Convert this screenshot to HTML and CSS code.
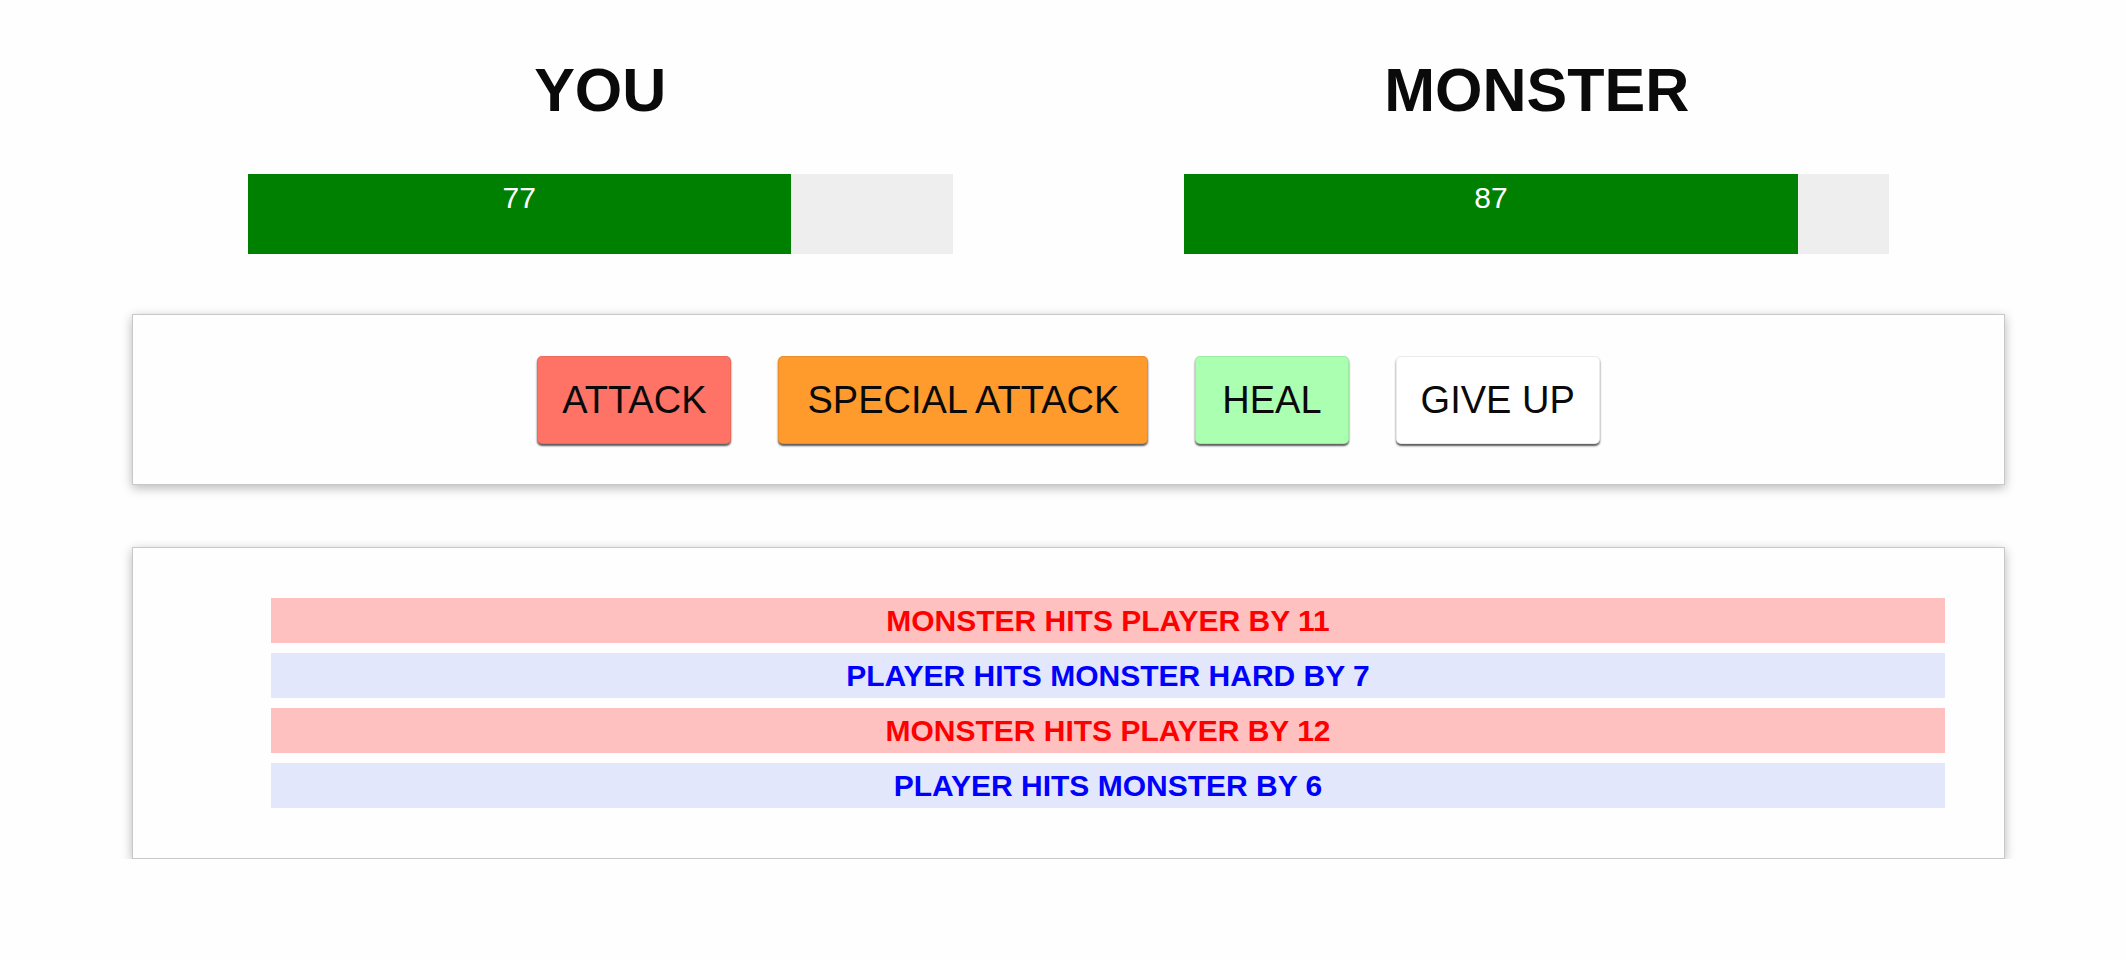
FILE: index.html
```html
<!DOCTYPE html>
<html lang="en">
<head>
<meta charset="utf-8">
<title>Monster Slayer</title>
<link rel="stylesheet" href="styles.css">
</head>
<body>
<div class="app">
  <section class="combatants">
    <div class="side">
      <h1 class="name">YOU</h1>
      <div class="healthbar">
        <div class="health" style="width: 77%">77</div>
      </div>
    </div>
    <div class="side">
      <h1 class="name">MONSTER</h1>
      <div class="healthbar">
        <div class="health" style="width: 87%">87</div>
      </div>
    </div>
  </section>

  <section class="card controls">
    <button class="btn btn-attack">ATTACK</button>
    <button class="btn btn-special">SPECIAL ATTACK</button>
    <button class="btn btn-heal">HEAL</button>
    <button class="btn btn-giveup">GIVE UP</button>
  </section>

  <section class="card log">
    <ul class="log-list">
      <li class="log-entry monster-turn">MONSTER HITS PLAYER BY 11</li>
      <li class="log-entry player-turn">PLAYER HITS MONSTER HARD BY 7</li>
      <li class="log-entry monster-turn">MONSTER HITS PLAYER BY 12</li>
      <li class="log-entry player-turn">PLAYER HITS MONSTER BY 6</li>
    </ul>
  </section>
</div>
</body>
</html>
```

FILE: styles.css
```css
* {
  box-sizing: border-box;
}

html, body {
  margin: 0;
  padding: 0;
  background: #fefefe;
  font-family: "Liberation Sans", Arial, Helvetica, sans-serif;
  color: #0a0a0a;
}

.app {
  width: 1873px;
  margin-left: 132px;
  padding-top: 56px;
}

.combatants {
  display: grid;
  grid-template-columns: 1fr 1fr;
}

.side {
  display: flex;
  flex-direction: column;
  align-items: center;
}

.name {
  margin: 0 0 49px;
  font-size: 61px;
  line-height: 69px;
  font-weight: bold;
  text-align: center;
  color: #0a0a0a;
}

.healthbar {
  width: 705px;
  height: 80px;
  background: #eeeeee;
  display: flex;
}

.health {
  height: 100%;
  background: #008000;
  color: #ffffff;
  font-size: 30px;
  line-height: 34px;
  padding-top: 7px;
  text-align: center;
}

.card {
  background: #fefefe;
  border: 1px solid #c8c8c8;
  box-shadow: 0 3px 10px rgba(0, 0, 0, 0.28);
}

.controls {
  margin-top: 60px;
  padding: 41px 0 40px;
  display: flex;
  justify-content: center;
  gap: 47px;
}

.btn {
  font-family: "Liberation Sans", Arial, Helvetica, sans-serif;
  font-size: 38px;
  line-height: 44px;
  padding: 21px 24px;
  border: 1px solid rgba(0, 0, 0, 0.08);
  border-radius: 5px;
  color: #0a0a0a;
  box-shadow: 0 2px 2px rgba(0, 0, 0, 0.65);
  cursor: pointer;
}

.btn-attack {
  background: #ff7366;
}

.btn-special {
  background: #ff9a2d;
  padding-left: 28px;
  padding-right: 28px;
}

.btn-heal {
  background: #aaffb0;
  padding-left: 26px;
  padding-right: 26px;
}

.btn-giveup {
  background: #ffffff;
}

.log {
  margin-top: 62px;
  padding: 50px 59px 50px 138px;
}

.log-list {
  list-style: none;
  margin: 0;
  padding: 0;
  display: flex;
  flex-direction: column;
  gap: 10px;
}

.log-entry {
  height: 45px;
  line-height: 45px;
  font-size: 30px;
  font-weight: bold;
  text-align: center;
}

.monster-turn {
  background: #ffc0c0;
  color: #ff0000;
}

.player-turn {
  background: #e2e7fc;
  color: #0000ff;
}
```
